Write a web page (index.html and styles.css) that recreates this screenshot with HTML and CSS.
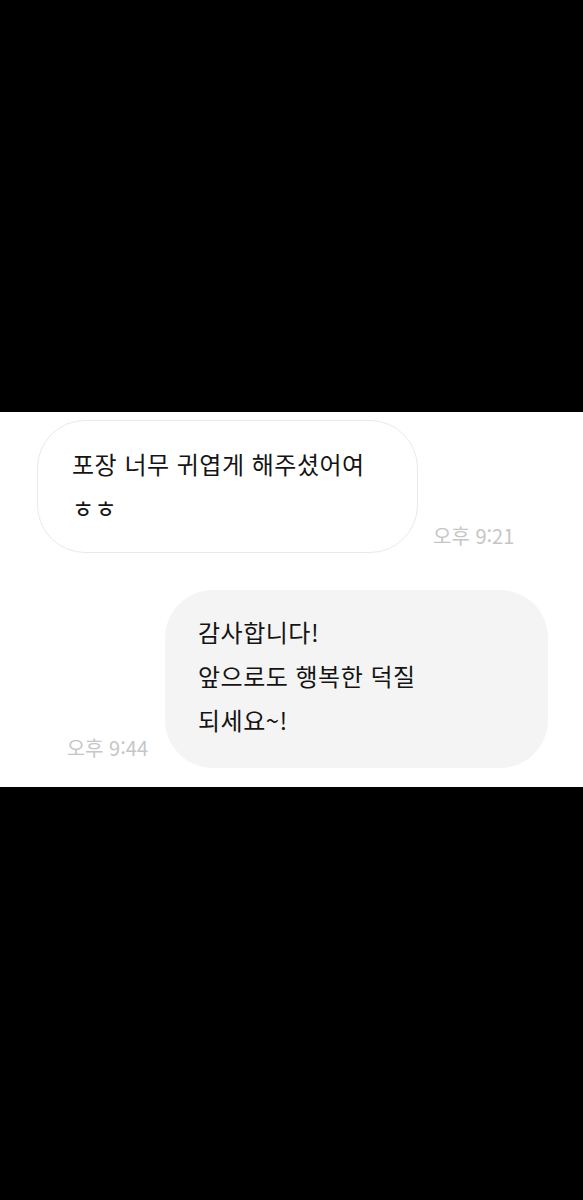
FILE: index.html
```html
<!DOCTYPE html>
<html lang="ko">

<head>
    <meta charset="UTF-8">
    <meta name="viewport" content="width=device-width, initial-scale=1.0">
    <title>채팅</title>
    <link rel="stylesheet" href="styles.css">
</head>

<body>
    <div class="chat">
        <!-- Received message -->
        <div class="row row-in">
            <div class="bubble bubble-in">포장 너무 귀엽게 해주셨어여<br>ㅎㅎ</div>
            <span class="time">오후 9:21</span>
        </div>

        <!-- Sent message -->
        <div class="row row-out">
            <span class="time">오후 9:44</span>
            <div class="bubble bubble-out">감사합니다!<br>앞으로도 행복한 덕질<br>되세요~!</div>
        </div>
    </div>
</body>

</html>
```

FILE: styles.css
```css
body {
    margin: 0;
    background-color: #000000;
    font-family: "Noto Sans CJK KR", "Noto Sans", sans-serif;
}

.chat {
    margin-top: 412px;
    height: 375px;
    box-sizing: border-box;
    background-color: #ffffff;
    padding: 8px 35px 0 37px;
    display: flex;
    flex-direction: column;
    gap: 37px;
}

.row {
    display: flex;
    align-items: flex-end;
}

.row-out {
    justify-content: flex-end;
}

.bubble {
    box-sizing: border-box;
    font-size: 24px;
    line-height: 44px;
    letter-spacing: 0.5px;
    color: #141414;
    border-radius: 48px;
}

.bubble-in {
    width: 381px;
    height: 133px;
    padding: 21px 10px 0 34px;
    border: 1px solid #e9e9e9;
}

.bubble-out {
    width: 383px;
    height: 178px;
    padding: 20px 10px 0 33px;
    background-color: #f4f4f4;
}

.time {
    font-size: 20px;
    line-height: 24px;
    color: #c6c6c6;
    white-space: nowrap;
}

.row-in .time {
    margin-left: 15px;
    margin-bottom: 5px;
}

.row-out .time {
    margin-right: 17px;
    margin-bottom: 8px;
}
```
